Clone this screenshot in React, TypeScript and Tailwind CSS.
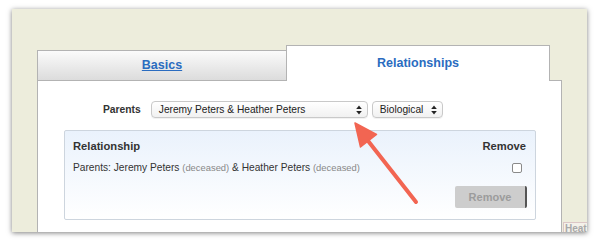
const SelectArrows = () => (
  <svg width="6" height="10" viewBox="0 0 6 10" className="shrink-0">
    <path d="M3 0.5 L5.8 4 L0.2 4 Z" fill="#222" />
    <path d="M3 9.5 L5.8 6 L0.2 6 Z" fill="#222" />
  </svg>
);

const FakeSelect = ({ label, width }: { label: string; width: string }) => (
  <div
    className={`${width} h-[17px] rounded-[4px] border border-[#c9c9c9] bg-gradient-to-b from-white to-[#f1f1f1] flex items-center justify-between pl-[7px] pr-[5px] text-[10.2px] text-[#222] shadow-[0_1px_0_rgba(0,0,0,0.05)]`}
  >
    <span>{label}</span>
    <SelectArrows />
  </div>
);

export default function App() {
  return (
    <div
      className="relative w-[600px] h-[248px] overflow-hidden bg-white pt-[9px] pl-[12px]"
      style={{ fontFamily: '"Liberation Sans", Arial, sans-serif' }}
    >
      <div className="relative w-[575px] h-[223px] overflow-hidden bg-[#ededdc] shadow-[0_1px_5px_rgba(0,0,0,0.5)] flex flex-col pl-[25px] pr-[25px] pt-[36px]">
        {/* tabs */}
        <div className="flex items-end h-[36px]">
          <div className="w-[249px] h-[31px] border-t border-l border-b border-[#b3b3b3] bg-gradient-to-b from-[#fbfbfb] to-[#dcdcdc] flex items-center justify-center">
            <span className="text-[12.5px] font-bold text-[#2a6cc0] underline">Basics</span>
          </div>
          <div className="w-[264px] h-[36px] border-t border-l border-r border-[#b3b3b3] bg-white flex items-center justify-center">
            <span className="text-[12.5px] font-bold text-[#2a6cc0]">Relationships</span>
          </div>
          <div className="flex-1 h-px bg-[#b3b3b3]" />
        </div>

        {/* panel */}
        <div className="flex-1 bg-white border-l border-r border-[#b3b3b3] flex flex-col">
          <div className="flex items-center mt-[20px] ml-[65px]">
            <span className="text-[10.3px] font-bold text-[#333] mr-[10px]">Parents</span>
            <FakeSelect label="Jeremy Peters & Heather Peters" width="w-[217px]" />
            <div className="ml-[4px]">
              <FakeSelect label="Biological" width="w-[71px]" />
            </div>
          </div>

          <div className="mt-[12px] ml-[26px] w-[472px] h-[90px] rounded-[2px] border border-[#cdd5de] bg-gradient-to-b from-[#eaf2fc] to-white flex flex-col pl-[8px]">
            <div className="flex items-center justify-between mt-[8px] pr-[9px] h-[14px]">
              <span className="text-[11.2px] font-bold text-[#333]">Relationship</span>
              <span className="text-[11.2px] font-bold text-[#333]">Remove</span>
            </div>
            <div className="flex items-center justify-between mt-[7px] pr-[13px]">
              <span className="text-[10.2px] text-[#333]">
                Parents: Jeremy Peters <span className="text-[9.4px] text-[#888]">(deceased)</span> &amp; Heather
                Peters <span className="text-[9.4px] text-[#888]">(deceased)</span>
              </span>
              <span className="w-[10px] h-[10px] rounded-[2px] border border-[#8a8a8a] bg-white" />
            </div>
            <div className="flex justify-end mt-[11px] pr-[8px]">
              <div className="w-[72px] h-[22px] rounded-[2px] bg-[#cdcdcd] border-r-2 border-[#555] flex items-center justify-center text-[11px] font-bold text-[#9c9c9c]">
                Remove
              </div>
            </div>
          </div>
        </div>

        <div className="absolute left-[551px] top-[213px] w-[40px] h-[12px] border-t border-l border-[#dcc6c6] bg-[#f4f1ea] pl-[1px] text-[10px] leading-[11px] font-bold text-[#a9a9a9]">
          Heath
        </div>
      </div>

      {/* annotation arrow */}
      <svg className="absolute inset-0 pointer-events-none" width="600" height="248">
        <line x1="416" y1="202" x2="365" y2="137" stroke="#f26552" strokeWidth="4" strokeLinecap="round" />
        <path d="M355 123 L376.5 134.5 L360.5 147 Z" fill="#f26552" stroke="#f26552" strokeWidth="1.5" strokeLinejoin="round" />
      </svg>
    </div>
  );
}
